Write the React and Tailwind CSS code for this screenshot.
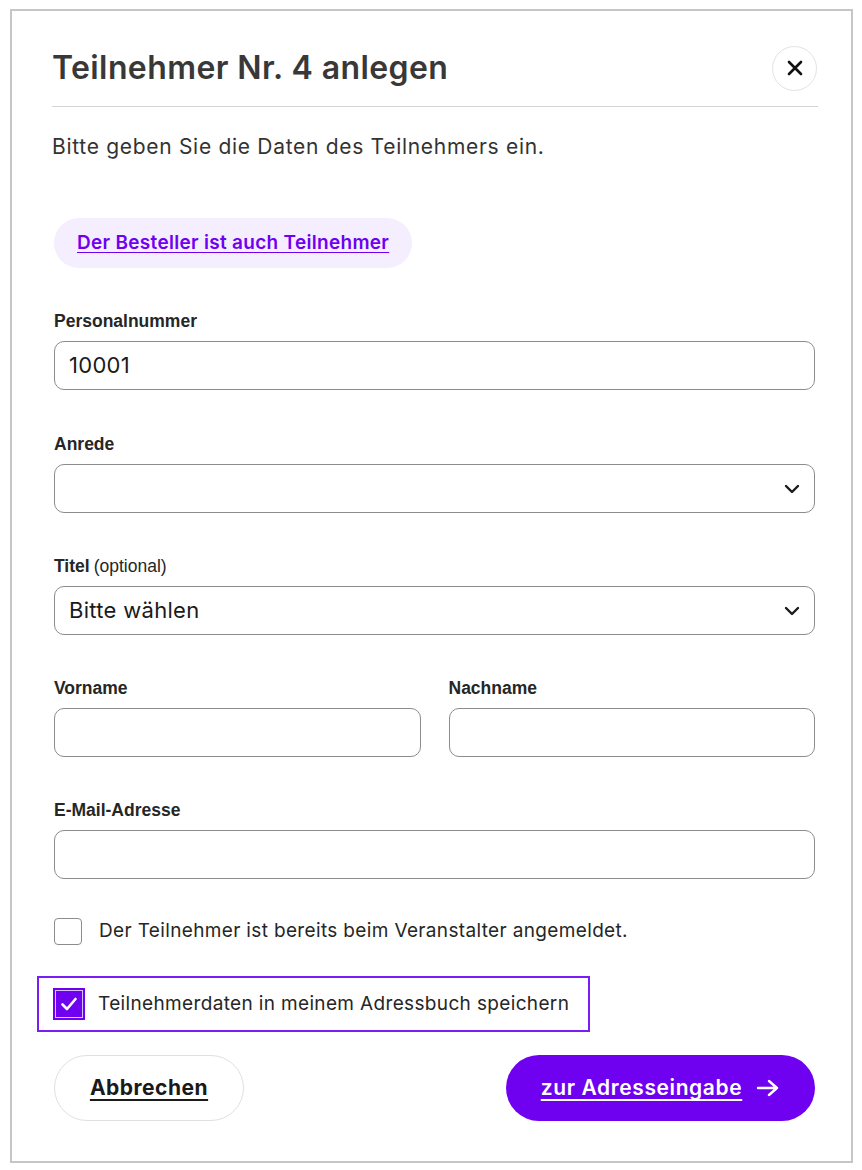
import React from "react";

const font = { fontFamily: "Inter, 'Noto Sans', sans-serif" };

function Chevron() {
  return (
    <svg width="16" height="10" viewBox="0 0 16 10" fill="none" className="absolute right-[14px] top-1/2 -translate-y-1/2">
      <path d="M2 2l6 6 6-6" stroke="#1a1a1a" strokeWidth="2.4" strokeLinecap="round" strokeLinejoin="round" />
    </svg>
  );
}

function Field({ label, optional, children, className = "" }) {
  return (
    <div className={"flex flex-col " + className}>
      <div className="h-5 flex items-center text-[17.5px] font-bold text-[#262626]" style={{ fontFamily: "'Liberation Sans', Arial, sans-serif" }}>
        {label}
        {optional && <span className="font-normal ml-[4px]">{optional}</span>}
      </div>
      <div className="mt-[10px]">{children}</div>
    </div>
  );
}

function Input({ value, select }) {
  return (
    <div className="relative h-[49px] rounded-[10px] border border-[#8c8c8c] flex items-center pl-[14px] text-[22px] tracking-[0.3px] text-[#1a1a1a]">
      {value}
      {select && <Chevron />}
    </div>
  );
}

export default function App() {
  return (
    <div className="bg-white min-h-[1170px] pt-[9px] pl-[10px]" style={font}>
      <div className="w-[843px] h-[1154px] border-2 border-[#c6c6c6] pl-[40px] pr-[33px] pt-[35px] flex flex-col">
        <div className="flex items-center justify-between h-[44px]">
          <h1 className="text-[32px] font-semibold text-[#383838] tracking-[0.4px]">Teilnehmer Nr. 4 anlegen</h1>
          <button className="w-[45px] h-[45px] rounded-full border border-[#e3e3e3] flex items-center justify-center mr-[1px]">
            <svg width="16" height="16" viewBox="0 0 16 16" fill="none">
              <path d="M2 2l12 12M14 2L2 14" stroke="#111" strokeWidth="2.6" strokeLinecap="round" />
            </svg>
          </button>
        </div>
        <div className="mt-[16px] h-px bg-[#d4d4d4]" />
        <p className="mt-[26px] text-[21px] leading-7 text-[#333] tracking-[0.7px]">Bitte geben Sie die Daten des Teilnehmers ein.</p>

        <div className="px-[2px] pr-[3px] flex flex-col">
          <div className="mt-[57px]">
            <button className="h-[50px] px-[23px] rounded-full bg-[#f4eefe] text-[#7000f0] text-[19px] font-semibold underline underline-offset-[3px] tracking-[0.3px]">
              Der Besteller ist auch Teilnehmer
            </button>
          </div>

          <Field label="Personalnummer" className="mt-[43px]">
            <Input value="10001" />
          </Field>
          <Field label="Anrede" className="mt-[44px]">
            <Input select />
          </Field>
          <Field label="Titel" optional="(optional)" className="mt-[43px]">
            <Input value="Bitte wählen" select />
          </Field>
          <div className="mt-[43px] grid grid-cols-2 gap-[28px]">
            <Field label="Vorname">
              <Input />
            </Field>
            <Field label="Nachname">
              <Input />
            </Field>
          </div>
          <Field label="E-Mail-Adresse" className="mt-[43px]">
            <Input />
          </Field>

          <div className="mt-[39px] flex items-center h-[27px]">
            <div className="w-[28px] h-[27px] rounded-[4px] border border-[#8c8c8c]" />
            <span className="ml-[17px] text-[19px] text-[#262626] tracking-[0.35px]">Der Teilnehmer ist bereits beim Veranstalter angemeldet.</span>
          </div>

          <div className="mt-[31px] -ml-[17px] w-[553px] h-[56px] border-2 border-[#7a1cf5] flex items-center pl-[14px]">
            <div className="w-[32px] h-[32px] bg-[#7000f0] p-[2px]">
              <div className="w-full h-full border border-[#d7c1fc] flex items-center justify-center">
                <svg width="18" height="16" viewBox="0 0 18 16" fill="none">
                  <path d="M2.5 8.5l4.5 4.5 8.5-10" stroke="#fff" strokeWidth="2.6" strokeLinecap="round" strokeLinejoin="round" />
                </svg>
              </div>
            </div>
            <span className="ml-[13px] text-[19px] text-[#262626] tracking-[0.35px]">Teilnehmerdaten in meinem Adressbuch speichern</span>
          </div>

          <div className="mt-[23px] flex justify-between">
            <button className="h-[66px] w-[190px] rounded-full border border-[#e0e0e0] text-[21px] font-bold text-[#1a1a1a] underline underline-offset-[4px] tracking-[0.5px]">
              Abbrechen
            </button>
            <button className="h-[66px] w-[309px] rounded-full bg-[#7000f0] text-white text-[21px] font-semibold flex items-center justify-center gap-[14px] tracking-[0.6px]">
              <span className="underline underline-offset-[4px]">zur Adresseingabe</span>
              <svg width="24" height="20" viewBox="0 0 24 20" fill="none">
                <path d="M2 10h19M13 3l8 7-8 7" stroke="#fff" strokeWidth="2.4" strokeLinecap="round" strokeLinejoin="round" />
              </svg>
            </button>
          </div>
        </div>
      </div>
    </div>
  );
}
